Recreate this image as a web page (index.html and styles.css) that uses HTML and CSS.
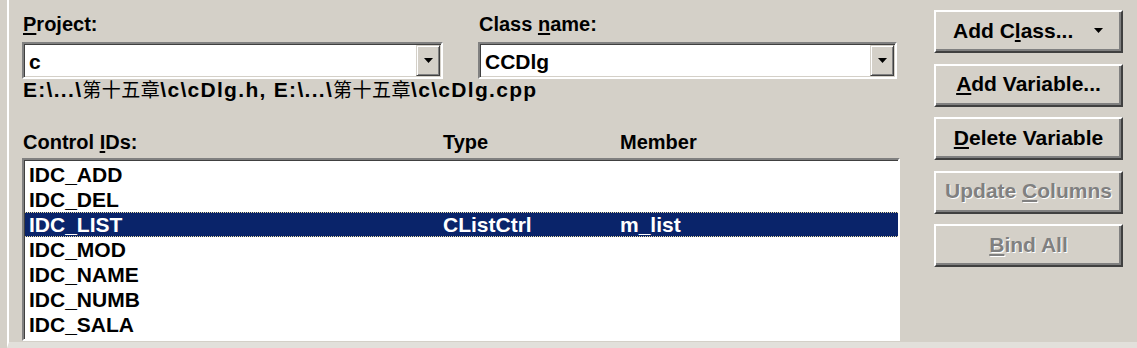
FILE: index.html
```html
<!DOCTYPE html>
<html>
<head>
<meta charset="utf-8">
<link rel="stylesheet" href="styles.css">
</head>
<body>
<div class="frame">
  <div class="main">
    <div class="fields">
      <div class="field field-project">
        <div class="lbl"><u>P</u>roject:</div>
        <div class="combo">
          <span class="combo-text">c</span>
          <span class="drop"><svg width="9" height="5" viewBox="0 0 9 5"><path d="M0 0H9L4.5 5Z" fill="#000"/></svg></span>
        </div>
      </div>
      <div class="field field-class">
        <div class="lbl">Class <u>n</u>ame:</div>
        <div class="combo">
          <span class="combo-text">CCDlg</span>
          <span class="drop"><svg width="9" height="5" viewBox="0 0 9 5"><path d="M0 0H9L4.5 5Z" fill="#000"/></svg></span>
        </div>
      </div>
    </div>
    <div class="path">E:\...\<span class="cjk">第十五章</span>\c\cDlg.h, E:\...\<span class="cjk">第十五章</span>\c\cDlg.cpp</div>
    <div class="cols">
      <span>Control <u>I</u>Ds:</span>
      <span>Type</span>
      <span>Member</span>
    </div>
    <div class="list">
      <div class="row"><span>IDC_ADD</span><span></span><span></span></div>
      <div class="row"><span>IDC_DEL</span><span></span><span></span></div>
      <div class="row selected"><span>IDC_LIST</span><span>CListCtrl</span><span>m_list</span></div>
      <div class="row"><span>IDC_MOD</span><span></span><span></span></div>
      <div class="row"><span>IDC_NAME</span><span></span><span></span></div>
      <div class="row"><span>IDC_NUMB</span><span></span><span></span></div>
      <div class="row"><span>IDC_SALA</span><span></span><span></span></div>
    </div>
  </div>
  <div class="buttons">
    <div class="btn btn-split"><span>Add C<u>l</u>ass...</span><svg width="9" height="5" viewBox="0 0 9 5"><path d="M0 0H9L4.5 5Z" fill="#000"/></svg></div>
    <div class="btn"><span><u>A</u>dd Variable...</span></div>
    <div class="btn"><span><u>D</u>elete Variable</span></div>
    <div class="btn disabled"><span>Update <u>C</u>olumns</span></div>
    <div class="btn disabled"><span><u>B</u>ind All</span></div>
  </div>
</div>
</body>
</html>
```

FILE: styles.css
```css
html, body {
  margin: 0;
  padding: 0;
}

body {
  width: 1137px;
  height: 348px;
  overflow: hidden;
  background: #d4d0c8;
  font-family: "Liberation Sans", Arial, sans-serif;
  font-weight: bold;
  font-size: 21px;
  color: #000;
}

u {
  text-decoration: underline;
  text-decoration-thickness: 2px;
  text-underline-offset: 2px;
}

.frame {
  box-sizing: border-box;
  margin-left: 7px;
  height: 348px;
  border-left: 2px solid #ffffff;
  border-bottom: 6px solid #e2e0db;
  padding-left: 13px;
  display: flex;
}

.main {
  width: 878px;
  padding-top: 14px;
}

.fields {
  display: flex;
  gap: 35px;
}

.field-project { width: 421px; }
.field-class { width: 419px; }

.lbl {
  font-size: 20px;
  line-height: 20px;
  height: 20px;
  padding-left: 1px;
  margin-bottom: 8px;
}

.combo {
  box-sizing: border-box;
  height: 37px;
  background: #fff;
  border: 2px solid;
  border-color: #808080 #ffffff #ffffff #808080;
  box-shadow: inset 1px 1px 0 #404040, inset -1px -1px 0 #d4d0c8;
  display: flex;
  align-items: stretch;
  padding: 1px;
}

.combo-text {
  flex: 1;
  padding-left: 4px;
  line-height: 33px;
}

.drop {
  box-sizing: border-box;
  width: 24px;
  background: #d4d0c8;
  border: 1px solid;
  border-color: #d4d0c8 #404040 #404040 #d4d0c8;
  box-shadow: inset 1px 1px 0 #ffffff, inset -1px -1px 0 #808080;
  display: flex;
  align-items: center;
  justify-content: center;
}

.path {
  line-height: 20px;
  height: 20px;
  padding-left: 1px;
  letter-spacing: 1.3px;
  white-space: nowrap;
}

.cjk {
  font-family: "Noto Sans CJK SC", "Noto Sans CJK JP", sans-serif;
  font-weight: normal;
  font-size: 19px;
  letter-spacing: 0.5px;
  line-height: 20px;
}

.cols {
  margin-top: 33px;
  font-size: 20px;
  line-height: 20px;
  height: 20px;
  padding-left: 1px;
  display: grid;
  grid-template-columns: 420px 177px auto;
}

.list {
  box-sizing: border-box;
  margin-top: 6px;
  height: 183px;
  background: #fff;
  border: 2px solid;
  border-color: #808080 #ffffff #ffffff #808080;
  box-shadow: inset 1px 1px 0 #404040;
  padding: 2px 0 0 1px;
  overflow: hidden;
}

.row {
  display: grid;
  grid-template-columns: 414px 177px auto;
  height: 25px;
  line-height: 25px;
  padding-left: 4px;
  white-space: nowrap;
}

.row.selected {
  background: #0a246a;
  color: #fff;
  box-sizing: border-box;
  border-top: 1px dotted #e9dca0;
  border-bottom: 1px dotted #e9dca0;
  line-height: 23px;
  overflow: hidden;
}

.buttons {
  margin-left: 34px;
  width: 189px;
  padding-top: 10px;
  display: flex;
  flex-direction: column;
  gap: 10.5px;
}

.btn {
  box-sizing: border-box;
  height: 43px;
  background: #d4d0c8;
  border: 2px solid;
  border-color: #ffffff #404040 #404040 #ffffff;
  box-shadow: inset -2px -2px 0 #808080;
  display: flex;
  align-items: center;
  justify-content: center;
  white-space: nowrap;
  padding-bottom: 2px;
}

.btn-split {
  justify-content: space-between;
  padding-left: 17px;
  padding-right: 18px;
}

.btn.disabled {
  color: #808080;
  text-shadow: 1px 1px 0 #ffffff;
}
```
